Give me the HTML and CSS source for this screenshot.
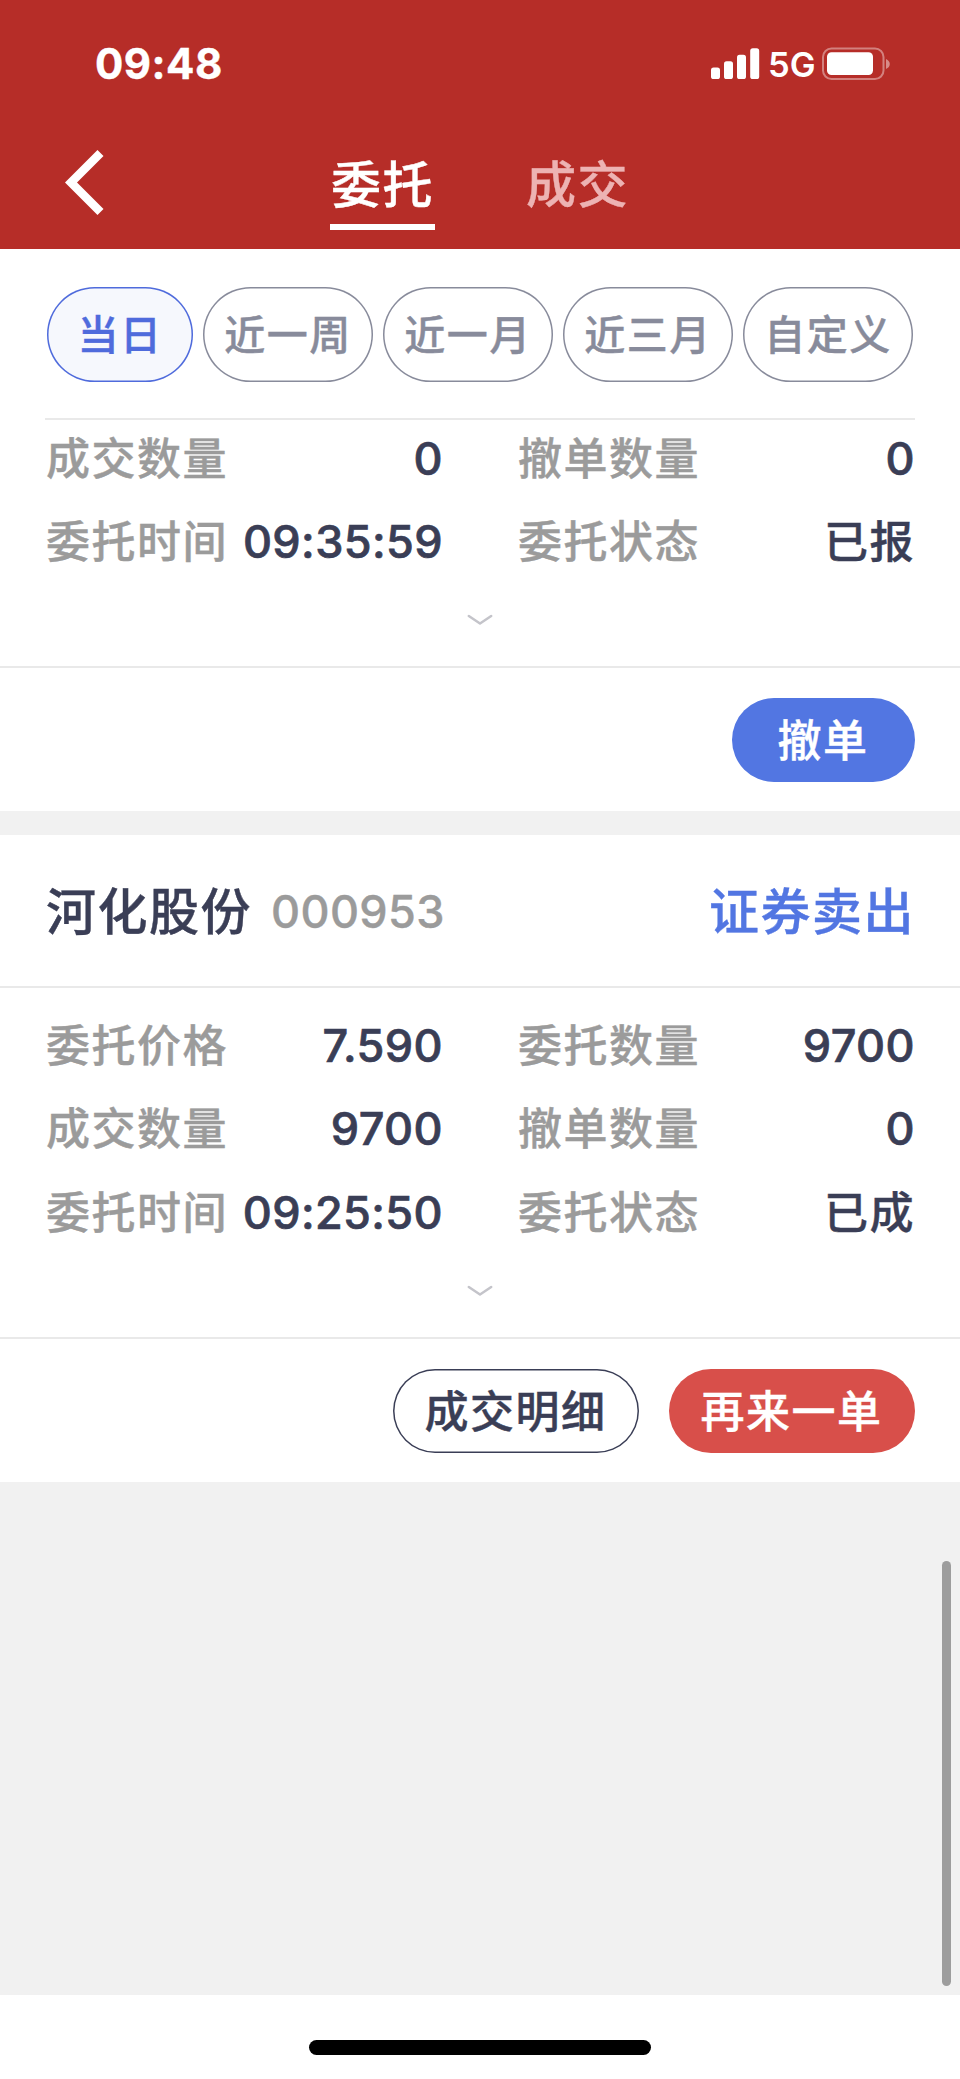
FILE: index.html
```
<!DOCTYPE html>
<html lang="zh-CN">
<head>
<meta charset="utf-8">
<title>委托</title>
<link rel="stylesheet" href="styles.css">
</head>
<body>
<header class="header">
  <div class="status">
    <span class="time">09:48</span>
    <div class="status-right">
      <svg class="signal" width="49" height="32" viewBox="0 0 49 32" fill="#fff">
        <rect x="0" y="19.5" width="9" height="11.5" rx="2.6"/>
        <rect x="13" y="13.3" width="9" height="17.7" rx="2.6"/>
        <rect x="26" y="6.7" width="9" height="24.3" rx="2.6"/>
        <rect x="39.2" y="0.3" width="9" height="30.7" rx="2.6"/>
      </svg>
      <span class="net">5G</span>
      <svg class="battery" width="70" height="34" viewBox="0 0 70 34">
        <rect x="1" y="1.5" width="60.5" height="30.5" rx="8.5" fill="none" stroke="#fff" stroke-opacity=".4" stroke-width="2"/>
        <rect x="5" y="5.3" width="46" height="22.7" rx="4.5" fill="#fff"/>
        <path d="M64 12c5 2 5 8 0 10z" fill="#fff" fill-opacity=".45"/>
      </svg>
    </div>
  </div>
  <nav class="nav">
    <svg class="back" width="40" height="66" viewBox="0 0 40 66" fill="none" stroke="#fff" stroke-width="8.5"><path d="M35.5 3 6 32.500l29.500 29.500"/></svg>
    <div class="tabs">
      <span class="tab tab-on">委托</span>
      <span class="tab">成交</span>
    </div>
  </nav>
</header>

<div class="chips">
  <span class="chip chip-on">当日</span>
  <span class="chip">近一周</span>
  <span class="chip">近一月</span>
  <span class="chip">近三月</span>
  <span class="chip">自定义</span>
</div>

<main class="list">
  <section class="card card-scrolled">
    <div class="rows">
      <div class="cell"><span class="label">成交数量</span><span class="value">0</span></div>
      <div class="cell"><span class="label">撤单数量</span><span class="value">0</span></div>
      <div class="cell"><span class="label">委托时间</span><span class="value">09:35:59</span></div>
      <div class="cell"><span class="label">委托状态</span><span class="value cjk">已报</span></div>
    </div>
    <div class="more"><svg width="26" height="12" viewBox="0 0 26 12" fill="none" stroke="#c4c4ca" stroke-width="2.500" stroke-linecap="round" stroke-linejoin="round"><path d="M1.800 2 13 9.500 24.200 2"/></svg></div>
    <div class="actions"><span class="btn btn-blue">撤单</span></div>
  </section>

  <section class="card">
    <div class="title">
      <span class="name">河化股份</span>
      <span class="code">000953</span>
      <span class="side">证券卖出</span>
    </div>
    <div class="rows">
      <div class="cell"><span class="label">委托价格</span><span class="value">7.590</span></div>
      <div class="cell"><span class="label">委托数量</span><span class="value">9700</span></div>
      <div class="cell"><span class="label">成交数量</span><span class="value">9700</span></div>
      <div class="cell"><span class="label">撤单数量</span><span class="value">0</span></div>
      <div class="cell"><span class="label">委托时间</span><span class="value">09:25:50</span></div>
      <div class="cell"><span class="label">委托状态</span><span class="value cjk">已成</span></div>
    </div>
    <div class="more"><svg width="26" height="12" viewBox="0 0 26 12" fill="none" stroke="#c4c4ca" stroke-width="2.500" stroke-linecap="round" stroke-linejoin="round"><path d="M1.800 2 13 9.500 24.200 2"/></svg></div>
    <div class="actions">
      <span class="btn btn-line">成交明细</span>
      <span class="btn btn-red">再来一单</span>
    </div>
  </section>
  <div class="scrollbar"></div>
</main>
<footer class="footer"><div class="home"></div></footer>
</body>
</html>
```

FILE: styles.css
```
* { box-sizing: border-box; }
body {
  margin: 0;
  width: 960px;
  height: 2079px;
  display: flex;
  flex-direction: column;
  background: #fff;
  color: #3a3e56;
  font-family: Inter, "Noto Sans CJK SC", sans-serif;
  font-weight: 500;
  white-space: nowrap;
  overflow: hidden;
  -webkit-text-stroke: 0.4px currentColor;
}
.header { height: 249px; flex: none; background: #b62d28; color: #fff; }
.status { height: 128px; padding: 0 68px 0 95px; display: flex; align-items: center; justify-content: space-between; }
.time { font-size: 42px; font-weight: 700; line-height: 50px; letter-spacing: 0.5px; }
.status-right { display: flex; align-items: center; }
.signal { margin-right: 8px; }
.net { font-size: 34.5px; font-weight: 600; line-height: 40px; width: 46px; margin-right: 8px; padding-top: 2px; -webkit-text-stroke-width: 0; }
.nav { height: 121px; display: flex; padding-left: 65px; }
.back { margin-top: 22px; }
.tabs { display: flex; gap: 90px; margin-left: 225px; }
.tab { height: 102px; width: 105px; padding-top: 19px; text-align: center; font-size: 50px; line-height: 76px; letter-spacing: 1.5px; color: #edb3b3; }
.tab-on { color: #fff; border-bottom: 6px solid #fff; }

.chips { position: relative; z-index: 1; height: 171px; flex: none; margin: 0 45px; padding: 38px 2px 0; display: flex; gap: 10px; border-bottom: 2px solid #e9e9e9; }
.chip { width: 170px; height: 95px; padding-top: 1px; box-shadow: inset 0 0 0 1.5px #888b9b; border-radius: 48px; text-align: center; font-size: 41px; line-height: 95px; letter-spacing: 1.5px; color: #888b9b; }
.chip-on { width: 146px; box-shadow: inset 0 0 0 1.5px #4f6bdc; color: #4f6bdc; background: #f6f8fd; }

.list { flex: none; display: flow-root; height: 1575px; background: #f1f1f1; position: relative; }
.card { background: #fff; margin-bottom: 24px; }
.card-scrolled { margin-top: -3px; }
.rows { display: grid; grid-template-columns: 397px 397px; column-gap: 75px; grid-auto-rows: 83.5px; padding: 0 45.5px 0 46px; }
.card-scrolled .rows { padding-bottom: 1px; }
.title + .rows { padding-top: 16px; }
.cell { display: flex; justify-content: space-between; align-items: center; line-height: 66px; }
.label { font-size: 44px; letter-spacing: 1.5px; color: #9b9b9b; }
.value { font-size: 45px; letter-spacing: 0.4px; -webkit-text-stroke-width: 0.7px; }
.cjk { font-size: 44px; letter-spacing: 1.5px; -webkit-text-stroke-width: 0.4px; }
.more { display: flex; justify-content: center; height: 81px; padding-top: 29px; }
.title + .rows + .more { height: 82.5px; padding-top: 30px; }
.actions { height: 145px; border-top: 2px solid #e9e9e9; padding: 30px 45px 0; display: flex; justify-content: flex-end; gap: 30px; }
.btn { height: 84px; width: 246px; border-radius: 42px; text-align: center; font-size: 44px; line-height: 86px; letter-spacing: 1.5px; padding-right: 1px; color: #fff; }
.btn-blue { width: 183px; background: #5276e2; }
.btn-line { box-shadow: inset 0 0 0 1.5px #3a3e56; color: #3a3e56; }
.btn-red { background: #d84f4a; }
.title { height: 153px; border-bottom: 2px solid #e9e9e9; padding: 2px 45px 0 46px; display: flex; align-items: center; }
.name, .side { font-size: 50px; line-height: 74px; letter-spacing: 1.5px; }
.code { margin-left: 19px; font-size: 45px; line-height: 60px; letter-spacing: 0.4px; color: #9b9b9b; }
.side { margin-left: auto; color: #5276e2; }
.scrollbar { position: absolute; right: 9px; top: 1141px; width: 9px; height: 425px; border-radius: 5px; background: #9d9d9d; }
.footer { flex: 1; display: flex; justify-content: center; padding-top: 45px; }
.home { width: 342px; height: 15px; border-radius: 8px; background: #000; }
```
